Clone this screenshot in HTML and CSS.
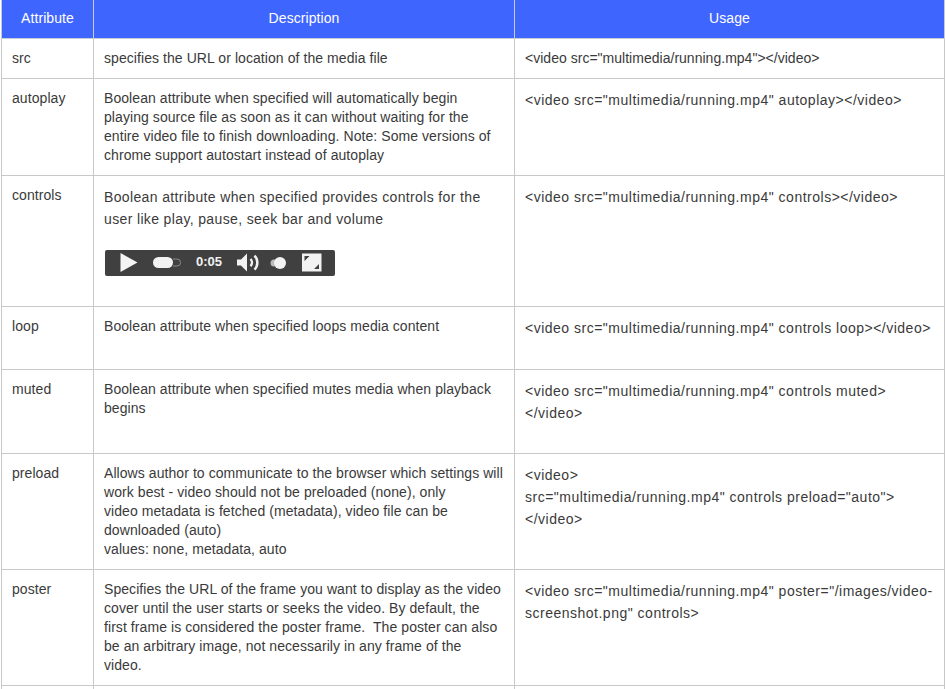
FILE: index.html
```html
<!DOCTYPE html>
<html lang="en">
<head>
<meta charset="utf-8">
<title>Video attributes</title>
<link rel="stylesheet" href="styles.css">
</head>
<body>
<table class="attrs">
<colgroup><col class="c1"><col class="c2"><col class="c3"></colgroup>
<thead><tr><th>Attribute</th><th>Description</th><th>Usage</th></tr></thead>
<tbody>
<tr><td>src</td><td>specifies the URL or location of the media file</td><td class="plain">&lt;video src="multimedia/running.mp4"&gt;&lt;/video&gt;</td></tr>
<tr class="r-autoplay"><td>autoplay</td><td>Boolean attribute when specified will automatically begin playing source file as soon as it can without waiting for the entire video file to finish downloading. Note: Some versions of chrome support autostart instead of autoplay</td><td class="usage">&lt;video src="multimedia/running.mp4" autoplay&gt;&lt;/video&gt;</td></tr>
<tr class="r-controls"><td>controls</td><td class="ctl">Boolean attribute when specified provides controls for the user like play, pause, seek bar and volume
<svg class="player" width="230" height="26" viewBox="0 0 230 26">
<rect width="230" height="26" rx="2" fill="#404040"/>
<path d="M15.500 3 L32.500 12.500 L15.500 22Z" fill="#f4f4f4"/>
<rect x="48" y="7" width="20" height="11" rx="5.500" fill="#f2f2f2"/>
<path d="M68 9 h4 a3.500 3.500 0 0 1 0 7 h-4" fill="none" stroke="#8a8a8a"/>
<text x="91" y="16" class="time">0:05</text>
<path d="M132 9.500 h4 l6 -6 v18 l-6 -6 h-4z" fill="#f2f2f2"/>
<path d="M145.500 9 a5 5 0 0 1 0 7 M149.500 5.500 a10 10 0 0 1 0 14" fill="none" stroke="#f2f2f2" stroke-width="2.500"/>
<circle cx="169" cy="13" r="3.500" fill="#bbb"/>
<circle cx="175" cy="13" r="6" fill="#f2f2f2"/>
<rect x="197" y="3.500" width="19.500" height="18" fill="#f2f2f2"/>
<path d="M199.500 6 h5 l-5 5z M214 19 h-5 l5 -5z" fill="#404040"/>
</svg></td><td class="usage">&lt;video src="multimedia/running.mp4" controls&gt;&lt;/video&gt;</td></tr>
<tr class="r-loop"><td>loop</td><td>Boolean attribute when specified loops media content</td><td class="usage">&lt;video src="multimedia/running.mp4" controls loop&gt;&lt;/video&gt;</td></tr>
<tr class="r-muted"><td>muted</td><td>Boolean attribute when specified mutes media when playback begins</td><td class="usage">&lt;video src="multimedia/running.mp4" controls muted&gt;<br>&lt;/video&gt;</td></tr>
<tr><td>preload</td><td>Allows author to communicate to the browser which settings will work best - video should not be preloaded (none), only<br>video metadata is fetched (metadata), video file can be downloaded (auto)<br>values: none, metadata, auto</td><td class="usage">&lt;video&gt;<br>src="multimedia/running.mp4" controls preload="auto"&gt;<br>&lt;/video&gt;</td></tr>
<tr><td>poster</td><td>Specifies the URL of the frame you want to display as the video cover until the user starts or seeks the video. By default, the first frame is considered the poster frame.&nbsp; The poster can also be an arbitrary image, not necessarily in any frame of the<br>video.</td><td class="usage">&lt;video src="multimedia/running.mp4" poster="/images/video-screenshot.png" controls&gt;</td></tr>
<tr class="r-next"><td></td><td></td><td></td></tr>
</tbody>
</table>
</body>
</html>
```
FILE: styles.css
```css
html, body { margin: 0; padding: 0; background: #fff; overflow: hidden; }
body { height: 689px; }
.attrs {
  border-collapse: collapse;
  table-layout: fixed;
  width: 943px;
  margin-left: 1px;
  font-family: "Liberation Sans", Arial, sans-serif;
  font-size: 14px;
  line-height: 19px;
  letter-spacing: 0.07px;
  color: #3a3a3a;
}
.c1 { width: 92px; }
.c2 { width: 421px; }
.c3 { width: 430px; }
th {
  background: #3f65ff;
  color: #fff;
  font-weight: 400;
  height: 36px;
  padding: 0 0 2px;
  text-align: center;
  border: 1px solid #c8ccd8;
  border-top: 0;
}
td {
  border: 1px solid #c8c8c8;
  padding: 10px;
  vertical-align: top;
}
td.plain { letter-spacing: 0.02px; }
td.usage { line-height: 22px; letter-spacing: 0.5px; }
td.ctl { line-height: 22px; letter-spacing: 0.36px; }
.r-autoplay td { height: 76px; }
.r-controls td { height: 110px; }
.r-loop td { height: 42px; }
.r-muted td { height: 63px; }
.r-next td { height: 3px; padding: 0; border-bottom: 0; }
.player { display: block; margin: 20px 0 0 1px; }
.time { font: 700 13px "Liberation Sans", Arial, sans-serif; letter-spacing: 0; fill: #f2f2f2; }
```
